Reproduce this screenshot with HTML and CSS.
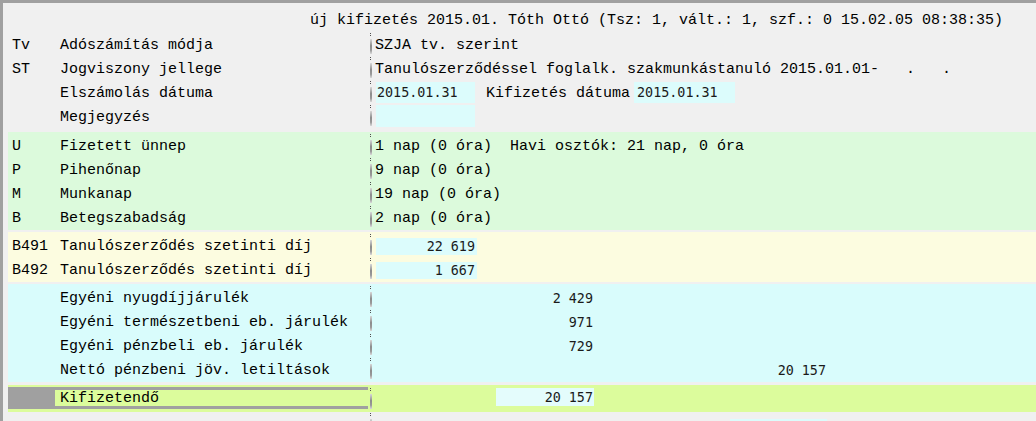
FILE: index.html
```html
<!DOCTYPE html>
<html lang="hu">
<head>
<meta charset="utf-8">
<title>új kifizetés</title>
<link rel="stylesheet" href="styles.css">
</head>
<body>
<div class="window">
  <div class="header">új kifizetés 2015.01. Tóth Ottó (Tsz: 1, vált.: 1, szf.: 0 15.02.05 08:38:35)</div>

  <div class="section plain">
    <div class="row"><span class="code">Tv</span><span class="label">Adószámítás módja</span><span class="sep"></span><span class="val">SZJA tv. szerint</span></div>
    <div class="row"><span class="code">ST</span><span class="label">Jogviszony jellege</span><span class="sep"></span><span class="val">Tanulószerződéssel foglalk. szakmunkástanuló 2015.01.01-   .   .</span></div>
    <div class="row"><span class="code"></span><span class="label">Elszámolás dátuma</span><span class="sep"></span><span class="val"><span class="field date">2015.01.31</span><span class="mid">Kifizetés dátuma</span><span class="field date2">2015.01.31</span></span></div>
    <div class="row"><span class="code"></span><span class="label">Megjegyzés</span><span class="sep"></span><span class="val"><span class="field note"></span></span></div>
  </div>

  <div class="section green">
    <div class="row"><span class="code">U</span><span class="label">Fizetett ünnep</span><span class="sep"></span><span class="val">1 nap (0 óra)  Havi osztók: 21 nap, 0 óra</span></div>
    <div class="row"><span class="code">P</span><span class="label">Pihenőnap</span><span class="sep"></span><span class="val">9 nap (0 óra)</span></div>
    <div class="row"><span class="code">M</span><span class="label">Munkanap</span><span class="sep"></span><span class="val">19 nap (0 óra)</span></div>
    <div class="row"><span class="code">B</span><span class="label">Betegszabadság</span><span class="sep"></span><span class="val">2 nap (0 óra)</span></div>
  </div>

  <div class="section yellow">
    <div class="row"><span class="code">B491</span><span class="label">Tanulószerződés szetinti díj</span><span class="sep"></span><span class="val"><span class="field amount">22 619</span></span></div>
    <div class="row"><span class="code">B492</span><span class="label">Tanulószerződés szetinti díj</span><span class="sep"></span><span class="val"><span class="field amount">1 667</span></span></div>
  </div>

  <div class="section cyan">
    <div class="row"><span class="code"></span><span class="label">Egyéni nyugdíjjárulék</span><span class="sep"></span><span class="val"><span class="num col1">2 429</span></span></div>
    <div class="row"><span class="code"></span><span class="label">Egyéni természetbeni eb. járulék</span><span class="sep"></span><span class="val"><span class="num col1">971</span></span></div>
    <div class="row"><span class="code"></span><span class="label">Egyéni pénzbeli eb. járulék</span><span class="sep"></span><span class="val"><span class="num col1">729</span></span></div>
    <div class="row"><span class="code"></span><span class="label">Nettó pénzbeni jöv. letiltások</span><span class="sep"></span><span class="val"><span class="num col1"></span><span class="num col2">20 157</span></span></div>
  </div>

  <div class="total">
    <span class="total-block"></span>
    <span class="total-label">Kifizetendő</span>
    <span class="sep"></span>
    <span class="val"><span class="field total-field">20 157</span></span>
  </div>

  <div class="row tail">
    <span class="code"></span><span class="label"></span><span class="sep"></span>
    <span class="val"><span class="field tail-field"></span></span>
  </div>
</div>
</body>
</html>
```

FILE: styles.css
```css
html, body {
  margin: 0;
  padding: 0;
}

body {
  background: #f0f0f0;
  font-family: "Liberation Mono", "Courier New", monospace;
  font-size: 15px;
  color: #000;
}

.window {
  box-sizing: border-box;
  height: 421px;
  overflow: hidden;
  border-top: 3px solid #a0a0a0;
  border-left: 3px solid #a0a0a0;
  padding-left: 5px;
}

.header {
  height: 24px;
  line-height: 24px;
  margin-top: 5px;
  padding-top: 1px;
  box-sizing: border-box;
  padding-left: 302px;
  white-space: pre;
}

.section {
  padding: 1px 0;
}

.section.plain {
  padding: 0;
}

.green {
  background: #dcfadc;
  margin-top: 4px;
}

.yellow {
  background: #fcfce0;
  margin-top: 2px;
}

.cyan {
  background: #d9fcfc;
  margin-top: 2px;
}

.row {
  display: flex;
  align-items: center;
  box-sizing: border-box;
  height: 24px;
  padding-top: 2px;
  white-space: pre;
}

.code {
  box-sizing: border-box;
  width: 52px;
  padding-left: 4px;
  flex: none;
}

.label {
  width: 308px;
  flex: none;
}

.sep {
  flex: none;
  align-self: stretch;
  width: 7px;
  margin-top: -2px;
  display: flex;
  flex-direction: column;
  align-items: flex-start;
}

.sep::before {
  content: "";
  margin-left: 2px;
  margin-top: 1px;
  width: 1px;
  height: 4px;
  background: repeating-linear-gradient(to bottom, #505050 0, #505050 1px, transparent 1px, transparent 2px);
}

.sep::after {
  content: "";
  margin-left: 2px;
  margin-top: 2px;
  width: 2px;
  height: 15px;
  background: linear-gradient(to bottom, #d8d8d8, #8c8c8c 45%, #9a9a9a 75%, #dadada);
}

.val {
  flex: 1;
  display: flex;
  align-items: center;
  white-space: pre;
}

.field {
  display: inline-block;
  box-sizing: border-box;
  background: #dcfcfc;
  font-family: "DejaVu Sans Mono", monospace;
  font-size: 13.4px;
  color: #1a1a1a;
}

.date {
  width: 99px;
  height: 21px;
  line-height: 21px;
  margin-left: 1px;
  margin-top: -2px;
  padding-left: 1px;
}

.mid {
  margin-left: 11px;
}

.date2 {
  width: 101px;
  height: 21px;
  line-height: 21px;
  margin-left: 4px;
  margin-top: -2px;
  padding-left: 3px;
}

.note {
  width: 99px;
  height: 22px;
  margin-left: 1px;
  margin-top: -2px;
}

.amount {
  width: 101px;
  height: 17px;
  line-height: 17px;
  margin-left: 1px;
  text-align: right;
  padding-right: 2px;
}

.num {
  display: inline-block;
  box-sizing: border-box;
  font-family: "DejaVu Sans Mono", monospace;
  font-size: 13.4px;
  color: #1a1a1a;
  text-align: right;
}

.col1 {
  width: 219px;
  padding-right: 1px;
}

.col2 {
  width: 233px;
  padding-right: 1px;
}

.total {
  display: flex;
  align-items: flex-start;
  box-sizing: border-box;
  height: 27px;
  margin-top: 3px;
  padding-top: 2px;
  background: #dcfc9c;
}

.total .sep {
  align-self: stretch;
  margin-top: 0;
}

.total-block {
  flex: none;
  width: 47px;
  height: 22px;
  background: #a0a0a0;
}

.total-label {
  flex: none;
  box-sizing: border-box;
  width: 313px;
  height: 22px;
  line-height: 17px;
  padding-left: 5px;
  border-top: 3px solid #a0a0a0;
  border-bottom: 3px solid #a0a0a0;
  background: #dcfc9c;
}

.total .val {
  align-self: flex-start;
}

.total-field {
  width: 98px;
  height: 18px;
  line-height: 19px;
  margin-left: 121px;
  margin-top: 1px;
  background: #e4fcfc;
  text-align: right;
  padding-right: 1px;
}

.tail {
  align-items: flex-start;
  padding-top: 0;
}

.tail .sep {
  margin-top: 0;
}

.tail .val {
  align-self: flex-start;
}

.tail-field {
  width: 97px;
  height: 18px;
  margin-left: 355px;
  margin-top: 7px;
}
```
